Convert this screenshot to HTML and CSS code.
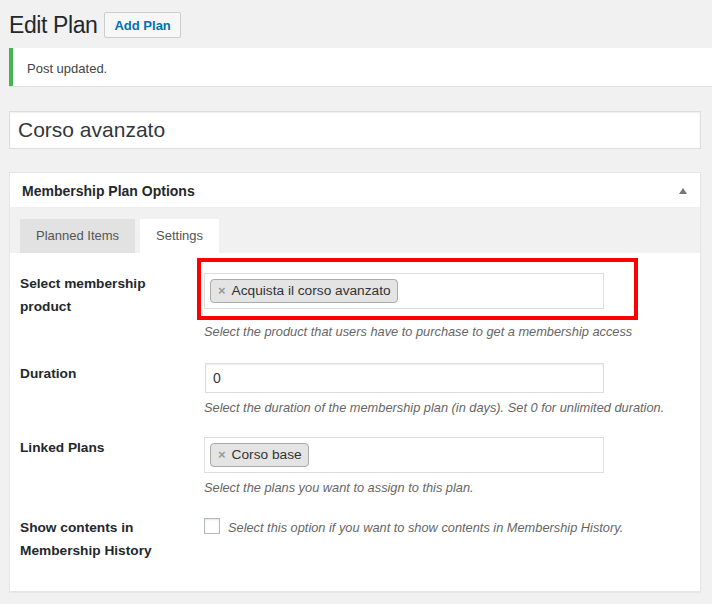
FILE: index.html
```html
<!DOCTYPE html>
<html lang="en">
<head>
<meta charset="utf-8">
<title>Edit Plan</title>
<link rel="stylesheet" href="styles.css">
</head>
<body>
<div class="wrap">
  <div class="page-head">
    <h1 class="page-title">Edit Plan</h1>
    <a class="title-action">Add Plan</a>
  </div>

  <div class="notice"><p>Post updated.</p></div>

  <div class="main">
    <div class="title-field">Corso avanzato</div>

    <div class="postbox">
      <div class="pb-head">
        <h2 class="pb-title">Membership Plan Options</h2>
        <span class="pb-toggle"></span>
      </div>
      <div class="tabs">
        <span class="tab">Planned Items</span>
        <span class="tab tab-active">Settings</span>
      </div>
      <div class="pb-body">
        <div class="row row-first">
          <div class="row-label">Select membership<br>product</div>
          <div class="row-field">
            <div class="multi">
              <span class="chip"><span class="chip-x">×</span>Acquista il corso avanzato</span>
            </div>
            <p class="desc desc-far">Select the product that users have to purchase to get a membership access</p>
          </div>
        </div>

        <div class="row">
          <div class="row-label">Duration</div>
          <div class="row-field">
            <div class="text-input">0</div>
            <p class="desc">Select the duration of the membership plan (in days). Set 0 for unlimited duration.</p>
          </div>
        </div>

        <div class="row">
          <div class="row-label">Linked Plans</div>
          <div class="row-field">
            <div class="multi">
              <span class="chip"><span class="chip-x">×</span>Corso base</span>
            </div>
            <p class="desc">Select the plans you want to assign to this plan.</p>
          </div>
        </div>

        <div class="row">
          <div class="row-label">Show contents in<br>Membership History</div>
          <div class="row-field check-line">
            <span class="checkbox"></span>
            <span class="check-text">Select this option if you want to show contents in Membership History.</span>
          </div>
        </div>

        <div class="highlight"></div>
      </div>
    </div>
  </div>
</div>
</body>
</html>
```

FILE: styles.css
```css
html, body {
  margin: 0;
  padding: 0;
  background: #f1f1f1;
}

body {
  font-family: "Liberation Sans", Arial, Helvetica, sans-serif;
  font-size: 13px;
  color: #444;
  width: 712px;
  height: 604px;
  overflow: hidden;
}

.wrap {
  padding: 12px 0 0 9px;
}

.page-head {
  display: flex;
  align-items: center;
  height: 26px;
}

.page-title {
  margin: 0;
  font-size: 23px;
  letter-spacing: -0.4px;
  font-weight: 400;
  line-height: 26px;
  color: #23282d;
}

.title-action {
  margin-left: 7px;
  height: 24px;
  display: inline-flex;
  align-items: center;
  padding: 0 9px;
  border: 1px solid #ccc;
  border-radius: 2px;
  background: #f7f7f7;
  color: #0073aa;
  font-weight: 700;
  font-size: 13px;
}

.notice {
  margin-top: 10px;
  background: #fff;
  border-left: 4px solid #46b450;
  box-shadow: 0 1px 1px rgba(0, 0, 0, 0.06);
  padding: 11px 14px 8px;
}

.notice p {
  margin: 0;
  line-height: 19px;
  font-size: 13px;
  color: #444;
}

.main {
  margin-right: 11px;
}

.title-field {
  margin-top: 25px;
  height: 36px;
  line-height: 36px;
  border: 1px solid #ddd;
  background: #fff;
  padding: 0 8px;
  font-size: 21px;
  color: #32373c;
  box-shadow: inset 0 1px 2px rgba(0, 0, 0, 0.07);
}

.postbox {
  margin-top: 23px;
  background: #fff;
  border: 1px solid #e5e5e5;
  box-shadow: 0 1px 1px rgba(0, 0, 0, 0.04);
}

.pb-head {
  display: flex;
  align-items: center;
  justify-content: space-between;
  height: 35px;
  border-bottom: 1px solid #eee;
  padding: 1px 13px 0 12px;
  box-sizing: border-box;
}

.pb-title {
  margin: 0;
  font-size: 14px;
  font-weight: 700;
  line-height: 34px;
  color: #23282d;
}

.pb-toggle {
  width: 0;
  height: 0;
  border-left: 4px solid transparent;
  border-right: 4px solid transparent;
  border-bottom: 6px solid #72777c;
}

.tabs {
  display: flex;
  gap: 5px;
  padding: 11px 10px 0;
  background: #f1f1f1;
}

.tab {
  padding: 0 16px;
  line-height: 34px;
  font-size: 13px;
  color: #555;
  background: #e2e2e2;
}

.tab-active {
  background: #fff;
}

.pb-body {
  position: relative;
  padding: 20px 10px 29px;
  display: flex;
  flex-direction: column;
  gap: 20px;
}

.row {
  display: grid;
  grid-template-columns: 184px 400px;
  align-items: start;
}

.row-first {
  margin-bottom: 2px;
}

.row-label {
  margin-top: -1px;
  font-size: 13.7px;
  font-weight: 700;
  line-height: 23px;
  color: #23282d;
}

.multi {
  box-sizing: border-box;
  height: 36px;
  border: 1px solid #ddd;
  background: #fff;
  padding: 5px;
  display: flex;
}

.chip {
  display: inline-flex;
  align-items: center;
  height: 22px;
  line-height: 22px;
  padding: 0 6px 0 5px;
  border: 1px solid #aaa;
  border-radius: 4px;
  background: #e4e4e4;
  font-size: 13.7px;
  color: #333;
}

.chip-x {
  color: #999;
  font-weight: 700;
  font-size: 13px;
  margin: 0 6px 0 2px;
}

.text-input {
  box-sizing: border-box;
  height: 30px;
  margin-left: 1px;
  border: 1px solid #ddd;
  background: #fff;
  box-shadow: inset 0 1px 2px rgba(0, 0, 0, 0.07);
  padding: 0 7px;
  line-height: 28px;
  font-size: 14px;
  color: #32373c;
}

.desc {
  margin: 6px 0 0;
  font-size: 12.8px;
  font-style: italic;
  line-height: 18px;
  color: #666;
  white-space: nowrap;
}

.desc-far {
  margin-top: 14px;
}

.check-line {
  display: flex;
  align-items: flex-start;
  gap: 8px;
}

.checkbox {
  box-sizing: border-box;
  width: 16px;
  height: 16px;
  margin-top: 1px;
  border: 1px solid #b4b9be;
  background: #fff;
  box-shadow: inset 0 1px 2px rgba(0, 0, 0, 0.1);
  flex: none;
}

.check-text {
  margin-top: 2px;
  font-size: 12.8px;
  font-style: italic;
  line-height: 18px;
  color: #666;
  white-space: nowrap;
}

.highlight {
  position: absolute;
  left: 187px;
  top: 5px;
  width: 441px;
  height: 62px;
  box-sizing: border-box;
  border: 4px solid #ff0000;
  pointer-events: none;
}
```
